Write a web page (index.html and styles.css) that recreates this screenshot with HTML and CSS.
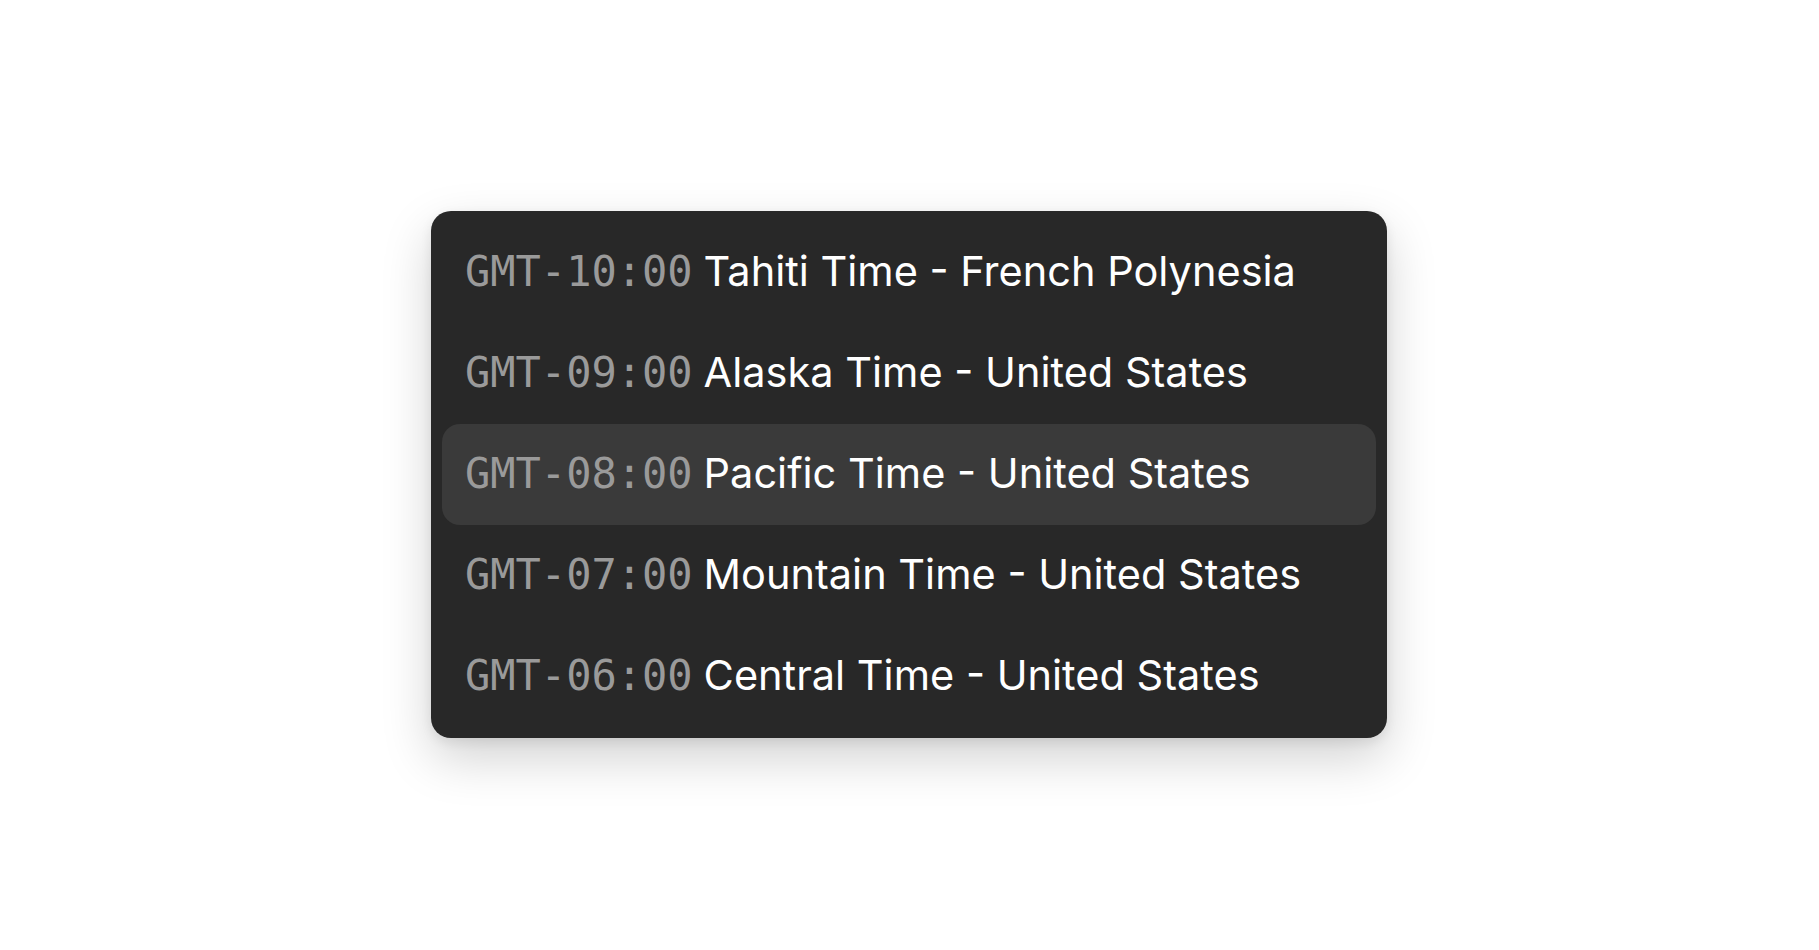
FILE: index.html
```html
<!DOCTYPE html>
<html lang="en">
<head>
    <meta charset="UTF-8">
    <meta name="viewport" content="width=device-width, initial-scale=1.0">
    <title>Timezone picker</title>
    <link rel="stylesheet" href="styles.css">
</head>
<body>
    <div class="stage">
        <ul class="tz-list">
            <li class="tz-item"><span class="tz-offset">GMT-10:00</span><span class="tz-name">Tahiti Time - French Polynesia</span></li>
            <li class="tz-item"><span class="tz-offset">GMT-09:00</span><span class="tz-name">Alaska Time - United States</span></li>
            <li class="tz-item active"><span class="tz-offset">GMT-08:00</span><span class="tz-name">Pacific Time - United States</span></li>
            <li class="tz-item"><span class="tz-offset">GMT-07:00</span><span class="tz-name">Mountain Time - United States</span></li>
            <li class="tz-item"><span class="tz-offset">GMT-06:00</span><span class="tz-name">Central Time - United States</span></li>
        </ul>
    </div>
</body>
</html>
```

FILE: styles.css
```css
body {
    margin: 0;
    background: #ffffff;
    font-family: Inter, 'Noto Sans', sans-serif;
}

.stage {
    height: 950px;
    padding-top: 211px;
    padding-left: 431px;
    box-sizing: border-box;
}

.tz-list {
    list-style: none;
    margin: 0;
    width: 956px;
    box-sizing: border-box;
    padding: 11px;
    background: #282828;
    border-radius: 20px;
    box-shadow: 0 20px 50px rgba(0, 0, 0, 0.18), 0 4px 12px rgba(0, 0, 0, 0.08);
}

.tz-item {
    height: 101px;
    box-sizing: border-box;
    display: flex;
    align-items: center;
    gap: 11px;
    padding: 0 0 3px 23px;
    border-radius: 18px;
    white-space: nowrap;
}

.tz-item.active {
    background: #3a3a3a;
}

.tz-offset {
    font-family: 'DejaVu Sans Mono', 'Liberation Mono', monospace;
    font-size: 42px;
    color: #9a9a9a;
}

.tz-name {
    font-size: 41.5px;
    color: #ffffff;
}
```
